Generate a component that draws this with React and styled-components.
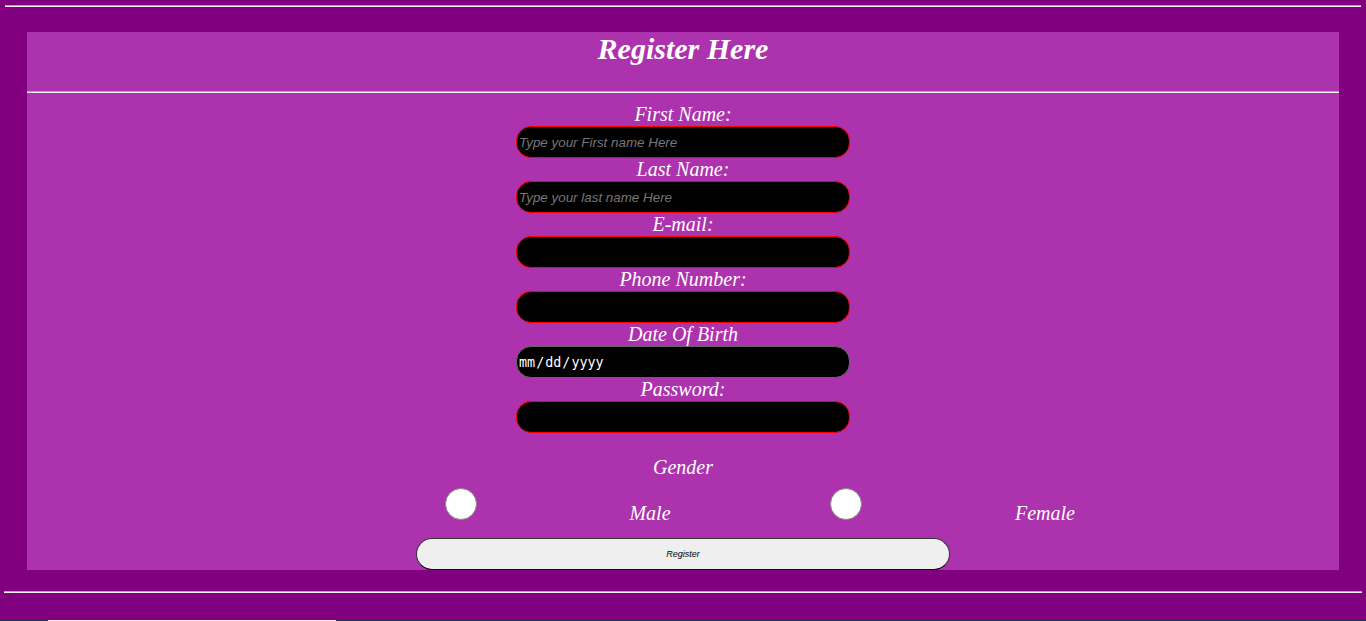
import styled, { createGlobalStyle } from 'styled-components';

// 페이지 기본 스타일
const GlobalStyle = createGlobalStyle`
    body {
        margin: 0;
        background: #800080;
        font-family: "Liberation Serif", serif;
        overflow: hidden;
    }
`;

const fields = [
    { label: 'First Name:', type: 'text', placeholder: 'Type your First name Here' },
    { label: 'Last Name:', type: 'text', placeholder: 'Type your last name Here' },
    { label: 'E-mail:', type: 'email' },
    { label: 'Phone Number:', type: 'tel' },
    { label: 'Date Of Birth', type: 'date' },
    { label: 'Password:', type: 'password' },
];

const App = () => {
    return (
        <>
            <GlobalStyle />
            <Page>
                <Rule />
                <Card>
                    <Title>Register Here</Title>
                    <InnerRule />
                    <Form onSubmit={(e) => e.preventDefault()}>
                        {fields.map((f) => (
                            <Field key={f.label}>
                                <Label>{f.label}</Label>
                                <Input
                                    type={f.type}
                                    placeholder={f.placeholder}
                                    $date={f.type === 'date'}
                                />
                            </Field>
                        ))}
                        <GenderTitle>Gender</GenderTitle>
                        <GenderRow>
                            <Radio type="radio" name="gender" />
                            <GenderLabel>Male</GenderLabel>
                            <Radio type="radio" name="gender" />
                            <GenderLabel>Female</GenderLabel>
                        </GenderRow>
                        <Submit type="submit">Register</Submit>
                    </Form>
                </Card>
                <BottomRule />
            </Page>
            <Footer>
                <FooterBar />
            </Footer>
        </>
    );
};

export default App;

const Page = styled.div`
    padding: 5px 5px 0;
`;

const Rule = styled.hr`
    margin: 0;
    height: 0;
    border: none;
    border-top: 1px solid #a9a9a9;
    border-bottom: 1px solid #f2f2f2;
`;

const Card = styled.div`
    margin: 25px 22px 0;
    background: #ad32ad;
    display: flex;
    flex-direction: column;
`;

const Title = styled.h1`
    margin: 0;
    height: 59px;
    text-align: center;
    color: #fff;
    font-size: 30px;
    font-weight: bold;
    font-style: italic;
    line-height: 34px;
`;

const InnerRule = styled(Rule)``;

const Form = styled.form`
    display: flex;
    flex-direction: column;
    align-items: center;
    padding-top: 10px;
`;

const Field = styled.div`
    display: flex;
    flex-direction: column;
    align-items: center;
`;

const Label = styled.label`
    color: #fff;
    font-size: 20px;
    font-style: italic;
    line-height: 23px;
`;

const Input = styled.input`
    box-sizing: border-box;
    width: 334px;
    height: 32px;
    margin: 0;
    padding: 0 2px 0 ${(p) => (p.$date ? '1px' : '2px')};
    background: #000;
    border: 1px solid ${(p) => (p.$date ? '#666' : '#ff0000')};
    border-radius: 15px;
    color: #fff;
    font-family: ${(p) => (p.$date ? '"DejaVu Sans Mono", monospace' : '"Liberation Sans", sans-serif')};
    font-size: 13.4px;
    outline: none;
    color-scheme: dark;

    &::placeholder {
        color: #777;
        font-style: italic;
    }

    &::-webkit-calendar-picker-indicator {
        display: none;
    }
`;

const GenderTitle = styled.div`
    margin-top: 23px;
    color: #fff;
    font-size: 20px;
    font-style: italic;
    line-height: 23px;
`;

const GenderRow = styled.div`
    align-self: flex-start;
    margin: 9px 0 0 339px;
    display: grid;
    grid-template-columns: 190px 188px 204px 194px;
    justify-items: center;
    align-items: end;
`;

const Radio = styled.input`
    appearance: none;
    box-sizing: border-box;
    width: 32px;
    height: 32px;
    margin: 0;
    background: #fff;
    border: 1px solid #888;
    border-radius: 50%;
    align-self: start;
`;

const GenderLabel = styled.span`
    color: #fff;
    font-size: 20px;
    font-style: italic;
    line-height: 23px;
    margin-top: 14px;
`;

const Submit = styled.button`
    box-sizing: border-box;
    width: 534px;
    height: 32px;
    margin-top: 13px;
    background: #efefef;
    border: 1px solid #333;
    border-bottom-color: #000;
    border-radius: 16px;
    color: #000;
    font-family: "Liberation Sans", sans-serif;
    font-size: 9px;
    font-style: italic;
`;

const BottomRule = styled(Rule)`
    margin: 21px -1px 0;
`;

const Footer = styled.footer`
    margin-top: 27px;
    height: 40px;
    background: #243746;
    padding-left: 48px;
`;

const FooterBar = styled.div`
    width: 288px;
    height: 10px;
    background: #f0f0f0;
`;
